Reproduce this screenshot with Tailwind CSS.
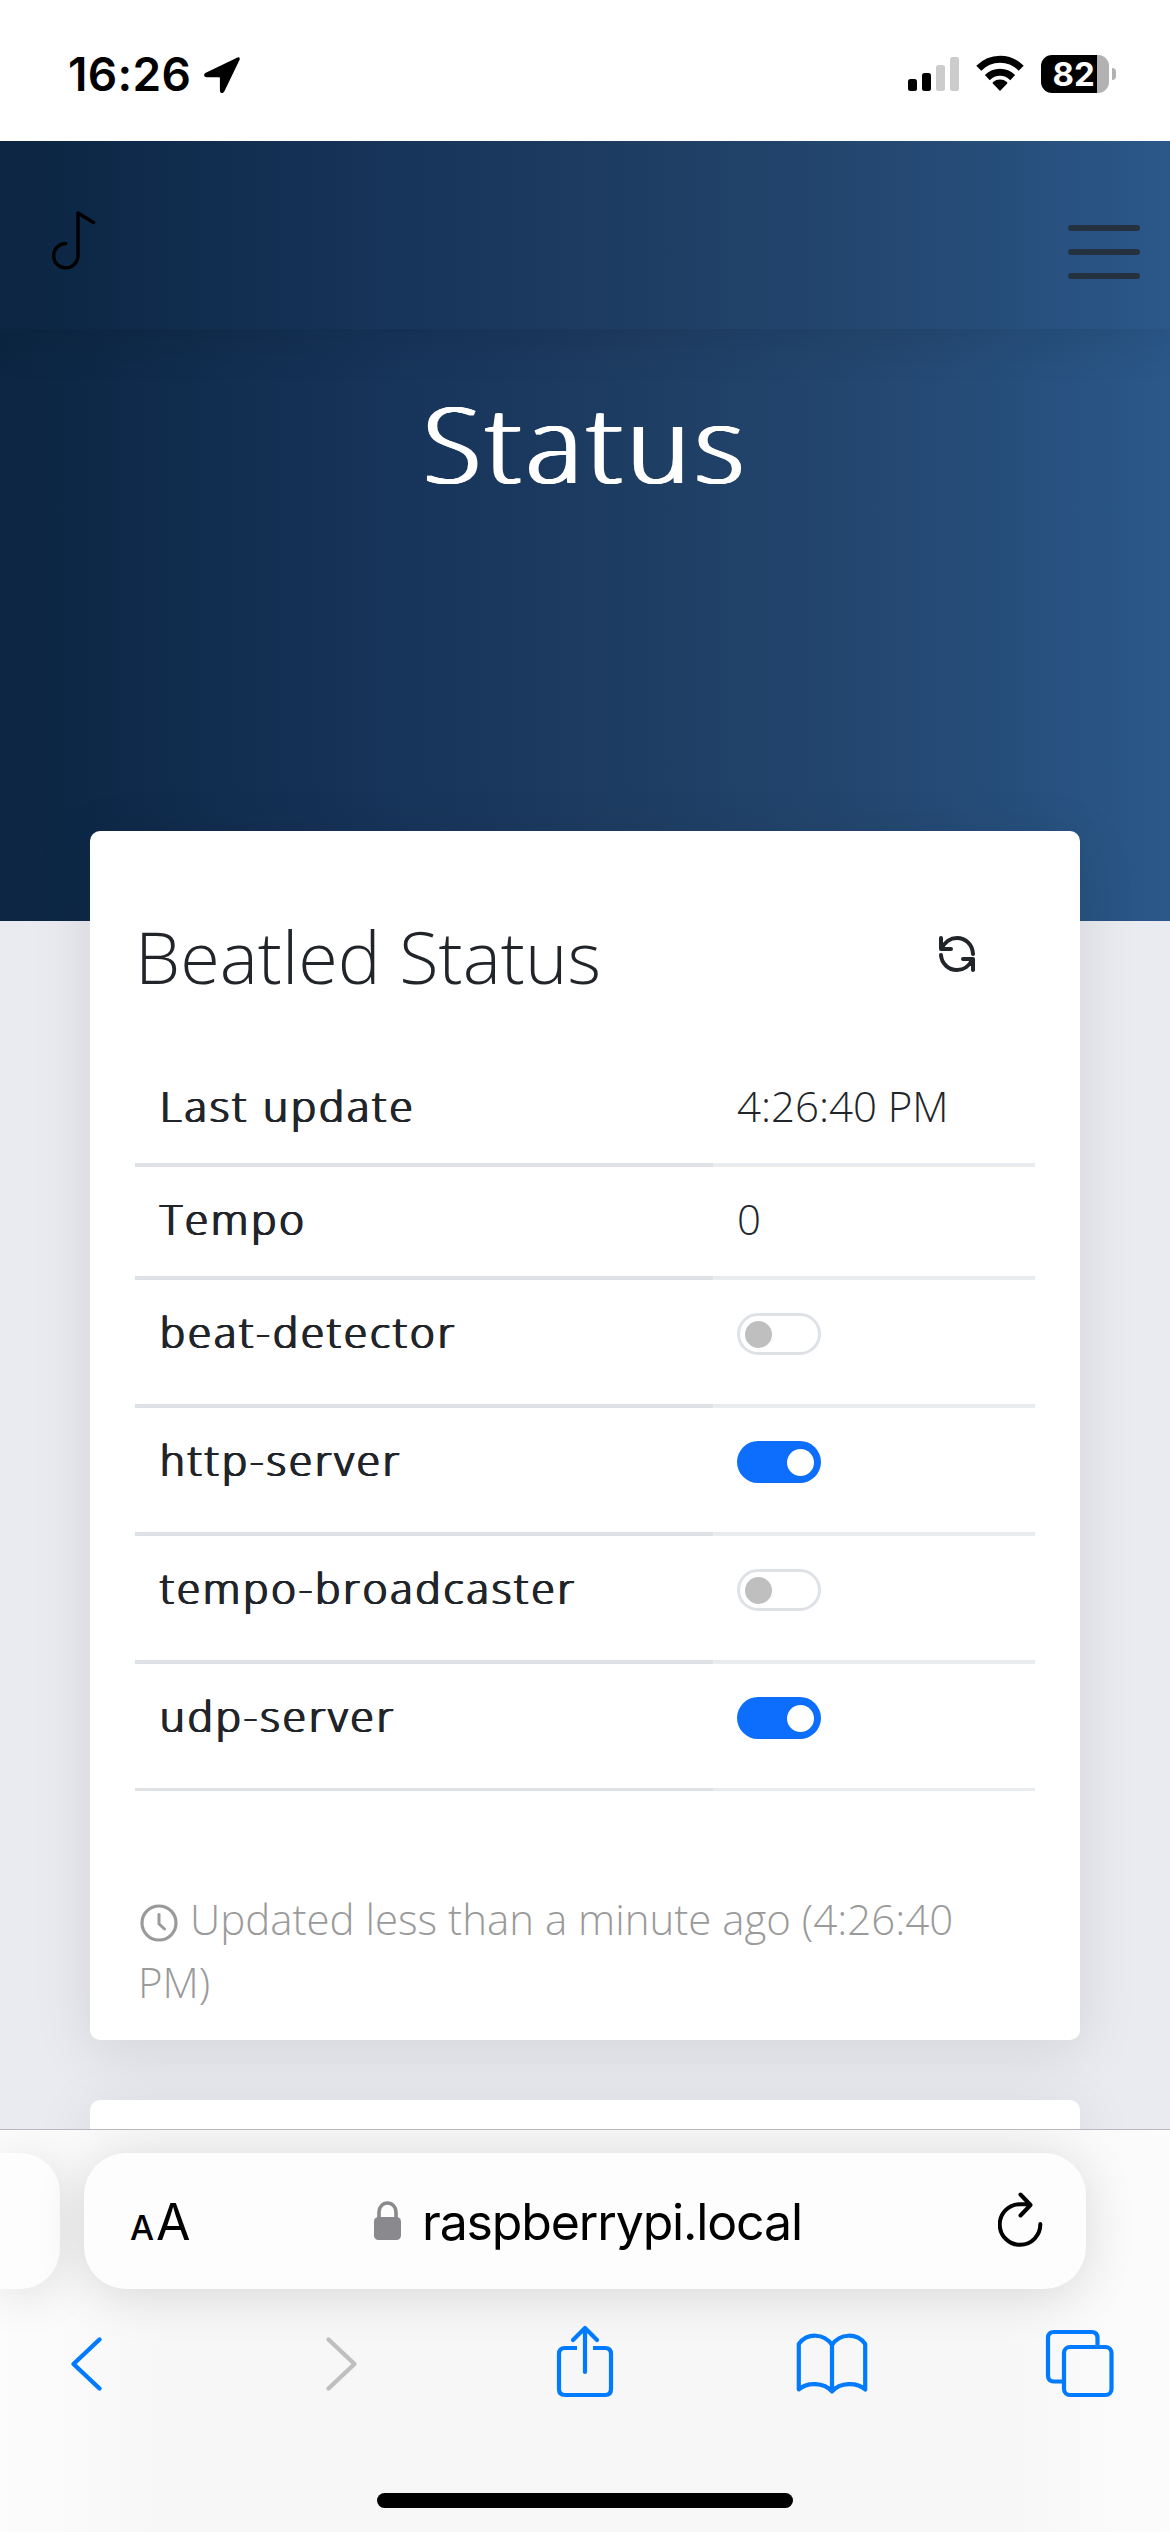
<!DOCTYPE html>
<html lang="en">
<head>
<meta charset="utf-8">
<title>Beatled Status</title>
<script src="https://cdn.jsdelivr.net/npm/@tailwindcss/browser@4"></script>
</head>
<body class="w-[1170px] h-[2532px] overflow-hidden bg-[#eaebf1] font-['Open_Sans',sans-serif] text-[#212529]">
<div class="flex flex-col h-[2532px]">
  <!-- System status bar -->
  <div class="relative z-10 flex h-[141px] shrink-0 items-start justify-between bg-white pl-[68px] pr-[54px] pt-[54px] text-black font-['Inter',sans-serif]">
    <div class="flex items-start">
      <span class="w-[135px] text-[46px] leading-[40px] font-semibold tracking-[0.300px]">16:26</span>
      <svg class="mt-[2px]" width="38" height="38" viewBox="0 0 38 38"><path d="M34.5 1.6 2.8 16.8C.2 18.200 .8 21.300 3.800 21.300H16.300c.4 0 .6.2.6.6V34.500c0 3 3.200 3.500 4.500.8L36.600 3.700C37.400 2 36 .8 34.500 1.600Z"/></svg>
    </div>
    <div class="flex items-start">
      <svg width="52" height="40" viewBox="0 0 52 40"><rect x="0" y="25" width="9" height="12" rx="2.500"/><rect x="14" y="19" width="9" height="18" rx="2.500"/><g fill="#ccc"><rect x="28" y="11" width="9" height="26" rx="2.500"/><rect x="42" y="3" width="9" height="34" rx="2.500"/></g></svg>
      <svg class="ml-[16px]" width="48" height="40" viewBox="0 0 48 40"><path d="M24 37 17 29.800c-.6-.6-.5-1.300.1-1.800 4-3.300 9.800-3.300 13.800 0 .6.500.7 1.200.1 1.800Z"/><path d="M11.300 23.600C18.600 16.600 29.400 16.600 36.700 23.600" fill="none" stroke="#000" stroke-width="7"/><path d="M2.800 14.300C14.600 2.200 33.400 2.200 45.200 14.300" fill="none" stroke="#000" stroke-width="7"/></svg>
      <div class="ml-[17px] mt-px flex items-center">
        <div class="flex h-[38px] w-[68px] rounded-[11px] bg-[linear-gradient(to_right,#000_56px,#b2b2b2_56px)] pl-[11.500px] text-[33px] leading-[38px] font-bold text-white">82</div>
        <div class="ml-[3px] h-[12px] w-[4px] rounded-r-full bg-[#b2b2b2]"></div>
      </div>
    </div>
  </div>

  <!-- Page header -->
  <div class="h-[780px] shrink-0 bg-[linear-gradient(to_right,#0b2542,#17345a_34%,#1e3d62_54%,#254a75_80%,#2a5889)]">
    <nav class="flex h-[188px] items-start justify-between pl-[51px] pr-[30px] bg-[linear-gradient(to_right,#0b2542,#17345a_34%,#1e3d62_54%,#254a75_80%,#2a5889)] shadow-[0_8px_48px_rgba(0,0,0,0.1)]">
      <svg class="mt-[68px]" width="46" height="62" viewBox="0 0 46 62" fill="none" stroke="#000" stroke-width="3.400" stroke-linecap="round" stroke-linejoin="round"><path d="M42.500 13.500 27 4v43.500a12.200 12.200 0 1 1-12.200-13"/></svg>
      <div class="mt-[84px] flex w-[72px] flex-col gap-[18px]">
        <span class="h-[6px] rounded-full bg-[#24313f]"></span>
        <span class="h-[6px] rounded-full bg-[#24313f]"></span>
        <span class="h-[6px] rounded-full bg-[#24313f]"></span>
      </div>
    </nav>
    <h1 class="pt-[41px] text-center text-[105.600px] leading-[144px] font-light tracking-[5px] text-white [text-shadow:-1px_0_0_#fff,1px_0_0_#fff,2px_0_0_#fff,3px_0_0_#fff]">Status</h1>
  </div>

  <!-- Page body -->
  <main class="h-[1208px] shrink-0 overflow-visible px-[90px]">
    <section class="-mt-[90px] flex h-[1209px] flex-col rounded-[10px] bg-white px-[45px] shadow-[0_12px_60px_rgba(0,0,0,0.1)]">
      <div class="flex items-start justify-between pt-[76px]">
        <h2 class="text-[72px] leading-[98px] font-light">Beatled Status</h2>
        <svg class="mt-[28px] mr-[59px]" width="38" height="38" viewBox="0 0 38 38" fill="none" stroke="#212529" stroke-width="4" stroke-linecap="round" stroke-linejoin="round"><path d="M3 3v11h10M3.500 14C6.500 7 12.500 3 19 3c8.500 0 15.500 6.500 16 16M35 35V24H25M34.500 24C31.500 31 25.500 35 19 35 10.500 35 3.500 28.500 3 20"/></svg>
      </div>
      <div class="mt-[49px] flex flex-col text-[42px] leading-[63px]">
        <div class="flex h-[113px]"><div class="w-[578px] border-b-4 border-[#dee2e6] pt-[20px] pl-[24px] font-light tracking-[3px] [text-shadow:0.500px_0_0_#212529,1px_0_0_#212529,1.500px_0_0_#212529,2px_0_0_#212529]">Last update</div><div class="grow border-b-4 border-[#e9ecef] pt-[20px] pl-[24px] font-light">4:26:40 PM</div></div>
        <div class="flex h-[113px]"><div class="w-[578px] border-b-4 border-[#dee2e6] pt-[20px] pl-[24px] font-light tracking-[3px] [text-shadow:0.500px_0_0_#212529,1px_0_0_#212529,1.500px_0_0_#212529,2px_0_0_#212529]">Tempo</div><div class="grow border-b-4 border-[#e9ecef] pt-[20px] pl-[24px] font-light">0</div></div>
        <div class="flex h-[128px]"><div class="w-[578px] border-b-4 border-[#dee2e6] pt-[20px] pl-[24px] font-light tracking-[3px] [text-shadow:0.500px_0_0_#212529,1px_0_0_#212529,1.500px_0_0_#212529,2px_0_0_#212529]">beat-detector</div><div class="grow border-b-4 border-[#e9ecef] pt-[33px] pl-[24px]"><div class="flex h-[42px] w-[84px] items-center rounded-full border-3 border-[#dee2e6] pl-[4.500px]"><span class="size-[27px] rounded-full bg-[#bfbfbf]"></span></div></div></div>
        <div class="flex h-[128px]"><div class="w-[578px] border-b-4 border-[#dee2e6] pt-[20px] pl-[24px] font-light tracking-[3px] [text-shadow:0.500px_0_0_#212529,1px_0_0_#212529,1.500px_0_0_#212529,2px_0_0_#212529]">http-server</div><div class="grow border-b-4 border-[#e9ecef] pt-[33px] pl-[24px]"><div class="flex h-[42px] w-[84px] items-center justify-end rounded-full bg-[#0d6efd] pr-[7.500px]"><span class="size-[27px] rounded-full bg-white"></span></div></div></div>
        <div class="flex h-[128px]"><div class="w-[578px] border-b-4 border-[#dee2e6] pt-[20px] pl-[24px] font-light tracking-[3px] [text-shadow:0.500px_0_0_#212529,1px_0_0_#212529,1.500px_0_0_#212529,2px_0_0_#212529]">tempo-broadcaster</div><div class="grow border-b-4 border-[#e9ecef] pt-[33px] pl-[24px]"><div class="flex h-[42px] w-[84px] items-center rounded-full border-3 border-[#dee2e6] pl-[4.500px]"><span class="size-[27px] rounded-full bg-[#bfbfbf]"></span></div></div></div>
        <div class="flex h-[127px]"><div class="w-[578px] border-b-3 border-[#dee2e6] pt-[20px] pl-[24px] font-light tracking-[3px] [text-shadow:0.500px_0_0_#212529,1px_0_0_#212529,1.500px_0_0_#212529,2px_0_0_#212529]">udp-server</div><div class="grow border-b-3 border-[#e9ecef] pt-[33px] pl-[24px]"><div class="flex h-[42px] w-[84px] items-center justify-end rounded-full bg-[#0d6efd] pr-[7.500px]"><span class="size-[27px] rounded-full bg-white"></span></div></div></div>
      </div>
      <p class="mt-[96px] pl-[3px] text-[42px] leading-[63px] font-light text-[#9a9a9a]"><svg class="mr-[12px] ml-[2px] inline-block align-[-7px]" width="38" height="38" viewBox="0 0 38 38" fill="none" stroke="#9a9a9a" stroke-linecap="round" stroke-linejoin="round"><circle cx="19" cy="19" r="17" stroke-width="3.200"/><path d="M19 10.500V20l5.500 5" stroke-width="3"/></svg>Updated less than a minute ago (4:26:40 PM)</p>
    </section>
    <section class="mt-[60px] h-[60px] rounded-t-[10px] bg-white shadow-[0_12px_60px_rgba(0,0,0,0.1)]"></section>
  </main>

  <!-- Browser toolbar -->
  <footer class="relative flex h-[403px] shrink-0 flex-col overflow-hidden border-t border-[#b9babd] bg-[linear-gradient(to_right,#fcfcfd,#f7f7f7_14%,#f7f7f7_86%,#fcfcfd)] text-black">
    <div class="flex gap-[24px] pt-[23px]">
      <div class="h-[136px] w-[60px] rounded-r-[40px] bg-[#fdfdfd] shadow-[0_6px_50px_rgba(0,0,0,0.12)]"></div>
      <div class="flex h-[136px] w-[1002px] items-start rounded-[42px] bg-[#fdfdfd] pl-[46px] font-['Inter',sans-serif] shadow-[0_6px_50px_rgba(0,0,0,0.13)]">
        <div class="flex w-[244px] items-baseline gap-[2px] pt-[34px] leading-[70px]"><span class="text-[34px] font-medium">A</span><span class="text-[50px]">A</span></div>
        <svg class="mt-[48px]" width="27" height="39" viewBox="0 0 27 39"><rect y="16" width="27" height="23" rx="4.500" fill="#8a8a8e"/><path d="M5 18V11a8.500 9 0 0 1 17 0v7" fill="none" stroke="#8a8a8e" stroke-width="3.600"/></svg>
        <span class="ml-[21px] w-[576px] pt-[34px] text-[50px] leading-[70px] tracking-[-1.150px]">raspberrypi.local</span>
        <svg class="mt-[39px] shrink-0" width="46" height="56" viewBox="0 0 46 56" fill="none" stroke="#000" stroke-width="4" stroke-linecap="round" stroke-linejoin="round"><path d="M42.300 32A20.300 20.300 0 1 1 22 12.200H32M22.500 2.500 32.500 13 22.500 23.500"/></svg>
      </div>
    </div>
    <div class="flex items-start pt-[34px] pl-[70px] [&>svg]:shrink-0 [&>svg]:fill-none [&>svg]:[stroke-linecap:round] [&>svg]:[stroke-linejoin:round]">
      <svg class="mt-[13px]" width="34" height="56" viewBox="0 0 34 56" stroke="#007aff" stroke-width="4.400"><path d="M29.500 3.500 3.500 28l26 24.500"/></svg>
      <svg class="mt-[13px] ml-[220px]" width="34" height="56" viewBox="0 0 34 56" stroke="#bfbfbf" stroke-width="4.400"><path d="M4.500 3.500 30.500 28l-26 24.500"/></svg>
      <svg class="mt-px ml-[198px]" width="58" height="76" viewBox="0 0 58 76" stroke="#007aff" stroke-width="4.200"><path d="M21 24H9q-6 0-6 6V65q0 6 6 6H49q6 0 6-6V30q0-6-6-6H37" class="[stroke-linecap:butt]"/><path d="M29 48V5M17 16 29 4 41 16"/></svg>
      <svg class="mt-[9px] ml-[182px]" width="72" height="64" viewBox="0 0 72 64" stroke="#007aff" stroke-width="4.200"><path d="M36 13C28 .8 11 .8 2.800 12V57.500C11 50 28 50 36 59.500 44 50 61 50 69.200 57.500V12C61 .8 44 .8 36 13ZM36 13V59"/></svg>
      <svg class="mt-[5px] ml-[176px]" width="70" height="70" viewBox="0 0 70 70" stroke="#007aff" stroke-width="4.200"><path d="M18 53.500H10q-6 0-6-6V10q0-6 6-6H47.500q6 0 6 6v8" class="[stroke-linecap:butt]"/><rect x="20" y="19" width="47.500" height="48" rx="6"/></svg>
    </div>
    <div class="absolute left-[377px] top-[363px] h-[15px] w-[416px] rounded-full bg-black"></div>
  </footer>
</div>
</body>
</html>
